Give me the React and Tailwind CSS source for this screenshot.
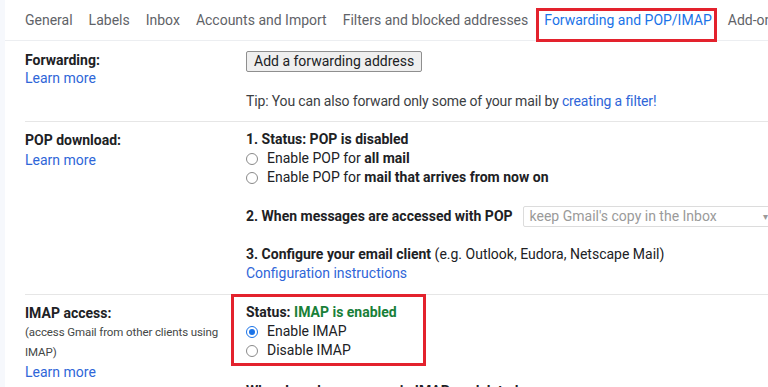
import React from "react";

const tabs = ["General", "Labels", "Inbox", "Accounts and Import", "Filters and blocked addresses"];

function Radio({ checked }) {
  return checked ? (
    <span className="w-[12px] h-[12px] rounded-full border-[1.5px] border-[#1a73e8] flex items-center justify-center shrink-0">
      <span className="w-[6px] h-[6px] rounded-full bg-[#1a73e8]" />
    </span>
  ) : (
    <span className="w-[12px] h-[12px] rounded-full border border-[#8a8a8a] bg-white shrink-0" />
  );
}

function Option({ checked, children }) {
  return (
    <div className="h-[19.2px] flex items-center gap-[9px]">
      <Radio checked={checked} />
      <span>{children}</span>
    </div>
  );
}

export default function App() {
  return (
    <div
      className="w-[768px] h-[387px] overflow-hidden flex bg-[#f6f8fc] text-[14px] text-[#202124]"
      style={{ fontFamily: "Roboto, 'Liberation Sans', sans-serif" }}
    >
      <div className="w-[5px] shrink-0" />
      <div className="flex-1 bg-white min-w-0">
        {/* tabs */}
        <div className="h-[41px] border-b border-[#eceef1] pl-[20px] flex gap-[16px] whitespace-nowrap text-[#5f6368]">
          {tabs.map((t) => (
            <div key={t} className="flex items-center">{t}</div>
          ))}
          <div className="relative flex items-center text-[#1a73e8]">
            Forwarding and POP/IMAP
            <div className="absolute left-[-8px] right-[-5px] top-[8px] bottom-[-2px] border-[3px] border-[#e3222d]" />
          </div>
          <div className="flex items-center">Add-ons</div>
        </div>

        <div className="pl-[20px]">
          {/* forwarding */}
          <div className="grid grid-cols-[221px_1fr] pt-[10px] pb-[11px] border-b border-[#e6e6e6]">
            <div className="leading-[18px]">
              <div className="font-bold">Forwarding:</div>
              <div className="text-[#2f66d8]">Learn more</div>
            </div>
            <div className="whitespace-nowrap">
              <button className="h-[21px] mt-[-1px] px-[7px] bg-[#efefef] border border-[#8f8f8f] rounded-[2px] leading-[19px] text-[#202124]">
                Add a forwarding address
              </button>
              <div className="mt-[20px] leading-[18px] text-[#3c4043] tracking-[-0.15px]">
                Tip: You can also forward only some of your mail by <span className="text-[#2f66d8]">creating a filter!</span>
              </div>
            </div>
          </div>

          {/* pop */}
          <div className="grid grid-cols-[221px_1fr] pt-[8px] pb-[10px] border-b border-[#e6e6e6]">
            <div className="leading-[20px]">
              <div className="font-bold">POP download:</div>
              <div className="text-[#2f66d8]">Learn more</div>
            </div>
            <div className="whitespace-nowrap leading-[19.2px]">
              <div className="font-bold h-[19.2px]">1. Status: POP is disabled</div>
              <Option>Enable POP for <b>all mail</b></Option>
              <Option>Enable POP for <b>mail that arrives from now on</b></Option>
              <div className="h-[19.2px]" />
              <div className="h-[19.2px] flex items-center">
                <span className="font-bold">2. When messages are accessed with POP</span>
                <div className="ml-[10px] w-[252px] h-[21px] shrink-0 border border-[#dcdcdc] rounded-[2px] flex items-center justify-between px-[6px] text-[#9a9a9a]">
                  <span>keep Gmail's copy in the Inbox</span>
                  <span className="text-[10px]">▾</span>
                </div>
              </div>
              <div className="h-[19.2px]" />
              <div className="h-[19.2px]">
                <b>3. Configure your email client</b> (e.g. Outlook, Eudora, Netscape Mail)
              </div>
              <div className="h-[19.2px] text-[#2f66d8]">Configuration instructions</div>
            </div>
          </div>

          {/* imap */}
          <div className="grid grid-cols-[221px_1fr]">
            <div className="pt-[9px]">
              <div className="font-bold leading-[18px]">IMAP access:</div>
              <div className="text-[11.5px] leading-[20px] text-[#444746] tracking-[-0.1px]">
                (access Gmail from other clients using<br />IMAP)
              </div>
              <div className="leading-[20px] text-[#2f66d8]">Learn more</div>
            </div>
            <div className="whitespace-nowrap">
              <div className="ml-[-15px] mt-[-1px] w-[195px] border-[3px] border-[#e3222d] pl-[12px] pt-[6.5px] pb-[2.5px] leading-[19px]">
                <div className="h-[19px] font-bold">
                  Status: <span className="text-[#188038]">IMAP is enabled</span>
                </div>
                <div className="h-[19px] flex items-center gap-[9px]">
                  <Radio checked />
                  <span>Enable IMAP</span>
                </div>
                <div className="h-[19px] flex items-center gap-[9px]">
                  <Radio />
                  <span>Disable IMAP</span>
                </div>
              </div>
              <div className="mt-[15px] leading-[20px] font-bold">When I mark a message in IMAP as deleted:</div>
            </div>
          </div>
        </div>
      </div>
    </div>
  );
}
